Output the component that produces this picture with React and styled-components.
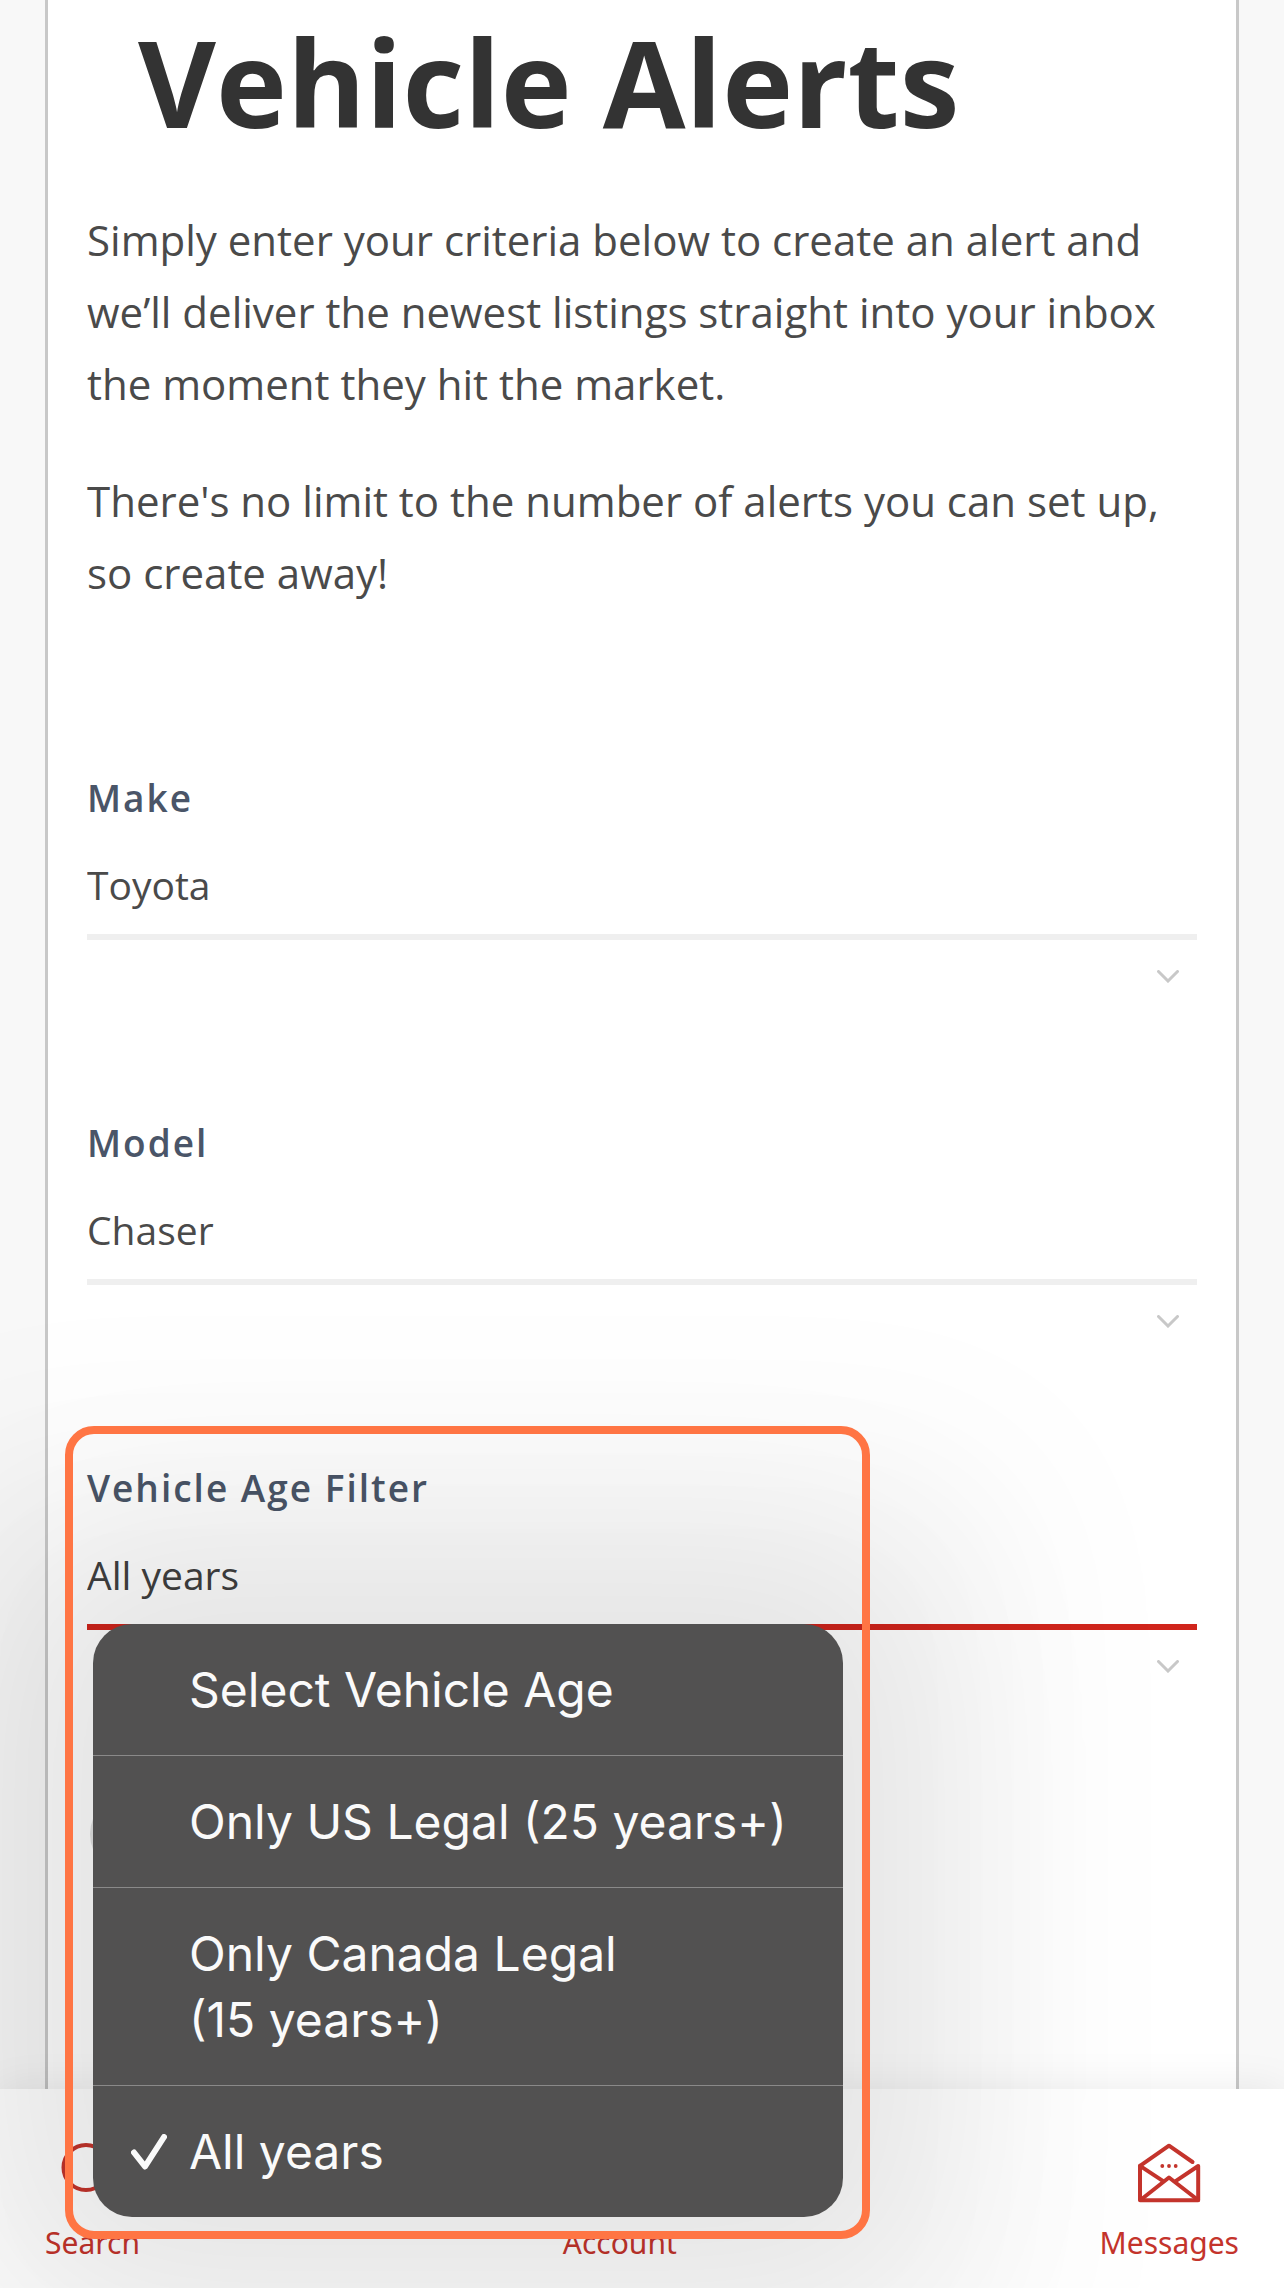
import { useState } from 'react';
import styled, { createGlobalStyle } from 'styled-components';

const ageOptions = [
  'Select Vehicle Age',
  'Only US Legal (25\u00a0years+)',
  'Only Canada Legal (15\u00a0years+)',
  'All years',
];

const Chevron = () => (
  <ChevronIcon viewBox="0 0 22 13" aria-hidden="true">
    <path d="M1.5 1.5 L11 11 L20.5 1.5" />
  </ChevronIcon>
);

const SearchIcon = () => (
  <NavIcon viewBox="0 0 64 64" aria-hidden="true">
    <circle cx="26" cy="26.5" r="22.5" />
    <path d="M42 43 L60 61" />
  </NavIcon>
);

const AccountIcon = () => (
  <NavIcon viewBox="0 0 64 64" aria-hidden="true">
    <circle cx="32" cy="20" r="14" />
    <path d="M6 60 C8 34 56 34 58 60 Z" />
  </NavIcon>
);

const MessagesIcon = () => (
  <NavIcon viewBox="0 0 64 64" aria-hidden="true">
    <path d="M55.5 21 L32 4.7 L3 24.8 V59.3 H61.2 V25 L39 39.8" />
    <path d="M3 24.8 L25.8 39.8" />
    <path d="M3.5 59 L32 36.5 L61 59" />
    <g fill="currentColor" stroke="none">
      <circle cx="25.3" cy="25" r="1.9" />
      <circle cx="32" cy="25" r="1.9" />
      <circle cx="38.7" cy="25" r="1.9" />
    </g>
  </NavIcon>
);

const SelectField = ({ id, label, options, value, onChange, active, children }) => (
  <Field>
    <Label htmlFor={id}>{label}</Label>
    <Select id={id} value={value} onChange={onChange} $active={active}>
      {options.map((option) => (
        <option key={option}>{option}</option>
      ))}
    </Select>
    <Chevron />
    {children}
  </Field>
);

const AgeMenu = ({ value, onSelect }) => (
  <Menu role="listbox" aria-label="Vehicle Age Filter">
    {ageOptions.map((option) => (
      <MenuOption
        key={option}
        type="button"
        role="option"
        aria-selected={option === value}
        onClick={() => onSelect(option)}
      >
        <CheckSlot>
          {option === value && (
            <svg width="36" height="36" viewBox="0 0 36 36" aria-hidden="true">
              <path d="M3 18.5 L14 32.5 L33 3" />
            </svg>
          )}
        </CheckSlot>
        <span>{option}</span>
      </MenuOption>
    ))}
  </Menu>
);

const App = () => {
  const [make, setMake] = useState('Toyota');
  const [model, setModel] = useState('Chaser');
  const [age, setAge] = useState('All years');

  return (
    <Page>
      <GlobalStyle />
      <Card>
        <Title>Vehicle Alerts</Title>
        <Intro>
          <p>
            Simply enter your criteria below to create an alert and we’ll deliver the newest
            listings straight into your inbox the moment they hit the market.
          </p>
          <p>There's no limit to the number of alerts you can set up, so create away!</p>
        </Intro>
        <Form onSubmit={(e) => e.preventDefault()}>
          <SelectField
            id="make"
            label="Make"
            options={['Toyota']}
            value={make}
            onChange={(e) => setMake(e.target.value)}
          />
          <SelectField
            id="model"
            label="Model"
            options={['Chaser']}
            value={model}
            onChange={(e) => setModel(e.target.value)}
          />
          <SelectField
            id="age"
            label="Vehicle Age Filter"
            options={ageOptions}
            value={age}
            onChange={(e) => setAge(e.target.value)}
            active
          >
            <AgeMenu value={age} onSelect={setAge} />
            <Highlight />
          </SelectField>
          <SubmitButton type="submit" aria-label="Create alert" />
        </Form>
      </Card>
      <NavBar>
        <NavLink href="#search">
          <SearchIcon />
          Search
        </NavLink>
        <NavLink href="#account">
          <AccountIcon />
          Account
        </NavLink>
        <NavLink href="#messages">
          <MessagesIcon />
          Messages
        </NavLink>
      </NavBar>
    </Page>
  );
};

const GlobalStyle = createGlobalStyle`
  * {
    box-sizing: border-box;
  }
  body {
    margin: 0;
    background-color: #f8f8f8;
    color: #4a4a4a;
    font-family: 'Open Sans', 'Noto Sans', sans-serif;
  }
`;

const Page = styled.div`
  display: flex;
  flex-direction: column;
  min-height: 100vh;
  overflow: hidden;
`;

const Card = styled.main`
  flex: 1;
  margin: 0 45px;
  padding: 16px 39px 0;
  border: solid #c8c8c8;
  border-width: 0 3px;
  background-color: #fff;
`;

const Title = styled.h1`
  margin: 0;
  padding-left: 51px;
  color: #333;
  font-size: 120px;
  font-weight: 700;
  line-height: 132px;
`;

const Intro = styled.div`
  display: flex;
  flex-direction: column;
  gap: 45px;
  margin-top: 56px;
  font-size: 42px;
  line-height: 72px;

  p {
    margin: 0;
  }
`;

const Form = styled.form`
  display: flex;
  flex-direction: column;
  gap: 136px;
  margin-top: 165px;
`;

const Field = styled.div`
  position: relative;
  display: flex;
  flex-direction: column;
`;

const Label = styled.label`
  color: #4a5568;
  font-size: 37px;
  font-weight: 600;
  line-height: 48px;
  letter-spacing: 2px;
`;

const Select = styled.select`
  appearance: none;
  width: 100%;
  margin: 0;
  padding: 36px 0 23px;
  border: 0;
  border-bottom: 6px solid ${({ $active }) => ($active ? '#d0251c' : '#efefef')};
  border-radius: 0;
  outline: none;
  background: transparent;
  color: ${({ $active }) => ($active ? '#404040' : '#4a4a4a')};
  font-family: inherit;
  font-size: 39px;
`;

const ChevronIcon = styled.svg`
  align-self: flex-end;
  width: 22px;
  height: 13px;
  margin: 30px 18px 0 0;
  fill: none;
  stroke: #c8c8c8;
  stroke-width: 3;
  stroke-linecap: round;
`;

const Menu = styled.div`
  position: absolute;
  z-index: 2;
  top: 160px;
  left: 6px;
  width: 750px;
  border-radius: 39px;
  background-color: #525151;
  box-shadow:
    0 0 190px 90px rgba(0, 0, 0, 0.08),
    0 0 190px 200px rgba(0, 0, 0, 0.03);
`;

const MenuOption = styled.button`
  display: grid;
  grid-template-columns: 96px 1fr;
  align-items: center;
  width: 100%;
  padding: 33px 24px 32px 0;
  border: 0;
  border-bottom: 1px solid #8a8989;
  background: transparent;
  color: #fafafa;
  font-family: Inter, 'Liberation Sans', sans-serif;
  font-size: 48px;
  line-height: 66px;
  text-align: left;

  &:last-child {
    border-bottom: 0;
  }
`;

const CheckSlot = styled.span`
  display: flex;
  padding-left: 38px;

  path {
    fill: none;
    stroke: #fafafa;
    stroke-width: 6;
    stroke-linecap: round;
    stroke-linejoin: round;
  }
`;

const Highlight = styled.div`
  position: absolute;
  z-index: 3;
  top: -38px;
  left: -22px;
  width: 805px;
  height: 813px;
  border: 8px solid #ff7544;
  border-radius: 29px;
  pointer-events: none;
`;

const SubmitButton = styled.button`
  width: 400px;
  height: 78px;
  margin: -14px 0 0 3px;
  border: 0;
  border-radius: 39px;
  background-color: #e2e2e2;
`;

const NavBar = styled.nav`
  display: flex;
  justify-content: space-between;
  padding: 52px 45px 25px;
  background-color: #fff;
  box-shadow: 0 0 40px rgba(0, 0, 0, 0.08);
`;

const NavLink = styled.a`
  display: flex;
  flex-direction: column;
  align-items: center;
  gap: 18px;
  color: #c4342c;
  font-family: 'Noto Sans', sans-serif;
  font-size: 30px;
  line-height: 40px;
  text-decoration: none;
`;

const NavIcon = styled.svg`
  width: 64px;
  height: 64px;
  fill: none;
  stroke: currentColor;
  stroke-width: 4;
  stroke-linecap: round;
  stroke-linejoin: round;
`;

export default App;
